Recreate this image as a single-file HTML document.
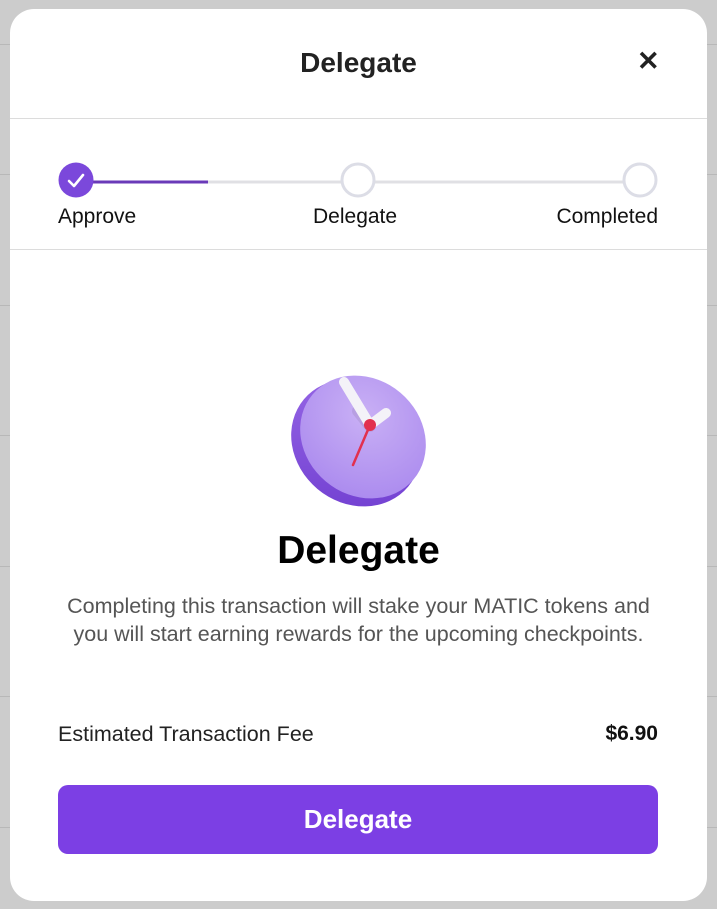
<!DOCTYPE html>
<html><head><meta charset="utf-8"><style>
*{margin:0;padding:0;box-sizing:border-box}
body{width:717px;height:909px;background:#cccccc;position:relative;overflow:hidden;font-family:"Liberation Sans",sans-serif}
.bgline{position:absolute;left:0;width:717px;height:1px;background:#b8b8b8}
.modal{position:absolute;left:10px;top:9px;width:697px;height:892px;background:#fff;border-radius:24px;overflow:hidden}
.title{position:absolute;top:38px;left:0;width:100%;text-align:center;font-size:28px;font-weight:bold;color:#222;}
.close{position:absolute;left:627px;top:37px;font-size:27px;font-weight:bold;color:#222}
.hr{position:absolute;left:0;width:100%;height:1px;background:#dcdcdc}
.step-label{position:absolute;top:196px;font-size:21px;color:#111}
.desc{position:absolute;top:583px;left:0;width:100%;text-align:center;font-size:21.5px;line-height:28px;color:#555}
.btn{position:absolute;left:48px;top:776px;width:600px;height:69px;background:#7c3fe4;border-radius:10px;color:#fff;font-size:26px;font-weight:bold;text-align:center;line-height:69px}
</style></head><body>
<div class="bgline" style="top:44px"></div>
<div class="bgline" style="top:174px"></div>
<div class="bgline" style="top:305px"></div>
<div class="bgline" style="top:435px"></div>
<div class="bgline" style="top:566px"></div>
<div class="bgline" style="top:696px"></div>
<div class="bgline" style="top:827px"></div>
<div class="modal">
  <div class="title">Delegate</div>
  <div class="close">✕</div>
  <div class="hr" style="top:109px"></div>
  <svg style="position:absolute;left:0;top:140px" width="697" height="60">
    <line x1="66" y1="33" x2="630" y2="33" stroke="#e0e0e4" stroke-width="3"/>
    <line x1="66" y1="33" x2="198" y2="33" stroke="#6a3ab8" stroke-width="3"/>
    <circle cx="66" cy="31" r="17.5" fill="#7b48db"/>
    <path d="M59 32 L64 37 L73 26" stroke="#fff" stroke-width="2.6" fill="none" stroke-linecap="round" stroke-linejoin="round"/>
    <circle cx="348" cy="31" r="16" fill="#fff" stroke="#dcdde6" stroke-width="3"/>
    <circle cx="630" cy="31" r="16" fill="#fff" stroke="#dcdde6" stroke-width="3"/>
  </svg>
  <div class="step-label" style="left:48px">Approve</div>
  <div class="step-label" style="left:303px">Delegate</div>
  <div class="step-label" style="right:49px">Completed</div>
  <div class="hr" style="top:240px"></div>
  <svg style="position:absolute;left:270px;top:346px" width="160" height="160" viewBox="0 0 160 160">
    <defs>
      <linearGradient id="side" x1="0" y1="0" x2="1" y2="1"><stop offset="0" stop-color="#9a6ae8"/><stop offset="1" stop-color="#6e3ccf"/></linearGradient>
      <radialGradient id="face" cx="0.4" cy="0.35" r="0.75"><stop offset="0" stop-color="#c9b0f5"/><stop offset="1" stop-color="#a988ee"/></radialGradient>
    </defs>
    <ellipse cx="76" cy="88" rx="68" ry="60" transform="rotate(40 76 88)" fill="url(#side)"/>
    <ellipse cx="83" cy="82" rx="66" ry="58" transform="rotate(40 83 82)" fill="url(#face)"/>
    <line x1="90" y1="71" x2="78" y2="56" stroke="#000" stroke-opacity="0.07" stroke-width="12" stroke-linecap="round"/>
    <line x1="90" y1="70" x2="64" y2="27" stroke="#f4f2f8" stroke-width="10" stroke-linecap="round"/>
    <line x1="90" y1="70" x2="106" y2="58" stroke="#f4f2f8" stroke-width="10" stroke-linecap="round"/>
    <line x1="90" y1="70" x2="73" y2="110" stroke="#e2304f" stroke-width="2.5" stroke-linecap="round"/>
    <circle cx="90" cy="70" r="6" fill="#e2304f"/>
  </svg>
  <div style="position:absolute;top:520px;left:0;width:100%;text-align:center;font-size:39px;font-weight:bold;color:#000">Delegate</div>
  <div class="desc">Completing this transaction will stake your MATIC tokens and<br>you will start earning rewards for the upcoming checkpoints.</div>
  <div style="position:absolute;left:48px;top:713px;font-size:21.5px;color:#222">Estimated Transaction Fee</div>
  <div style="position:absolute;right:49px;top:713px;font-size:21px;font-weight:bold;color:#111">$6.90</div>
  <div class="btn">Delegate</div>
</div>
</body></html>
